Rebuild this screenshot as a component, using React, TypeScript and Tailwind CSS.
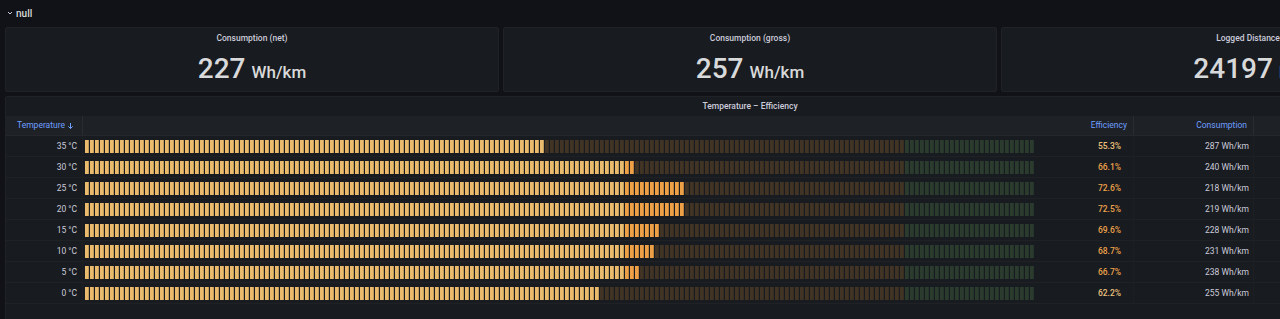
const stats = [
  { title: "Consumption (net)", value: "227", unit: "Wh/km" },
  { title: "Consumption (gross)", value: "257", unit: "Wh/km" },
  { title: "Logged Distance", value: "24197", unit: "km" },
];

const rows = [
  { temp: "35 °C", eff: 55.3, cons: "287 Wh/km" },
  { temp: "30 °C", eff: 66.1, cons: "240 Wh/km" },
  { temp: "25 °C", eff: 72.6, cons: "218 Wh/km" },
  { temp: "20 °C", eff: 72.5, cons: "219 Wh/km" },
  { temp: "15 °C", eff: 69.6, cons: "228 Wh/km" },
  { temp: "10 °C", eff: 68.7, cons: "231 Wh/km" },
  { temp: "5 °C", eff: 66.7, cons: "238 Wh/km" },
  { temp: "0 °C", eff: 62.2, cons: "255 Wh/km" },
];

// px offset inside the bar for a given percent
const pos = (p: number) => 18.6 + p * 8;
const ORANGE_AT = pos(65);
const GREEN_AT = pos(100);

const LcdBar = ({ value }: { value: number }) => {
  const end = pos(value);
  const cells = [];
  for (let i = 0; i < 190; i++) {
    const c = i * 5 + 2;
    let color: string;
    if (c < end) {
      color = c < ORANGE_AT ? "#eabb6c" : "#eea046";
    } else if (c >= GREEN_AT) {
      color = "#2b3c2e";
    } else {
      color = "#423424";
    }
    cells.push(<rect key={i} x={i * 5} y={0} width={3.8} height={13} fill={color} />);
  }
  return (
    <svg width={950} height={13} className="block">
      {cells}
    </svg>
  );
};

const effColor = (v: number) => (v < 65 ? "text-[#eac27e]" : "text-[#eda24c]");

export default function App() {
  return (
    <div
      className="w-[1280px] h-[319px] overflow-hidden bg-[#111217] text-[#ccccdc]"
      style={{ fontFamily: "Roboto, 'Liberation Sans', sans-serif" }}
    >
      <div className="w-[1500px] px-[5px]">
        <div className="h-[27px] flex items-center gap-[3px] pl-[2px] pb-[1px]">
          <svg width="6" height="6" viewBox="0 0 6 6">
            <path d="M1 2 L3 4 L5 2" stroke="#ccccdc" strokeWidth="1" fill="none" />
          </svg>
          <span className="text-[10px] font-medium text-[#d8d9da]">null</span>
        </div>

        <div className="grid grid-cols-3 gap-[4px]">
          {stats.map((s) => (
            <div key={s.title} className="h-[65px] bg-[#181b1f] border border-[#202226] rounded-[2px] flex flex-col items-center">
              <div className="text-[8.5px] font-medium h-[20px] leading-[20px]">{s.title}</div>
              <div className="flex items-baseline gap-[6px] mt-[6px] text-[#d8d9da]">
                <span className="text-[28px] leading-[30px] font-medium">{s.value}</span>
                <span className="text-[17px] leading-[20px] font-medium">{s.unit}</span>
              </div>
            </div>
          ))}
        </div>

        <div className="mt-[4px] h-[240px] bg-[#181b1f] border border-[#202226] rounded-[2px]">
          <div className="h-[19px] flex items-center justify-center text-[8.5px] font-medium">Temperature – Efficiency</div>
          <div className="flex h-[20px] bg-[#1e2126] text-[8.5px] text-[#6e9fff] border-b border-[#25272c]">
            <div className="w-[77px] pl-[11px] flex items-center border-r border-[#2a2c31] gap-[2px]">
              Temperature
              <svg width="7" height="8" viewBox="0 0 7 8">
                <path d="M3.5 1 V6.5 M1.3 4.3 L3.5 6.5 L5.7 4.3" stroke="#6e9fff" strokeWidth="1" fill="none" />
              </svg>
            </div>
            <div className="w-[958px]" />
            <div className="w-[93px] pr-[6px] flex items-center justify-end border-r border-[#2a2c31]">Efficiency</div>
            <div className="w-[120px] pr-[6px] flex items-center justify-end border-r border-[#2a2c31]">Consumption</div>
            <div className="flex-1" />
          </div>
          {rows.map((r) => (
            <div key={r.temp} className="flex h-[21px] text-[8.5px] border-b border-[#1f2125]">
              <div className="w-[77px] pr-[5px] flex items-center justify-end border-r border-[#1d1f23]">{r.temp}</div>
              <div className="w-[958px] pl-[2px] flex items-center">
                <LcdBar value={r.eff} />
              </div>
              <div className={`w-[93px] pr-[12px] flex items-center justify-end border-r border-[#1d1f23] font-medium ${effColor(r.eff)}`}>
                {r.eff.toFixed(1)}%
              </div>
              <div className="w-[120px] pr-[4px] flex items-center justify-end border-r border-[#1d1f23]">{r.cons}</div>
              <div className="flex-1" />
            </div>
          ))}
        </div>
      </div>
    </div>
  );
}
